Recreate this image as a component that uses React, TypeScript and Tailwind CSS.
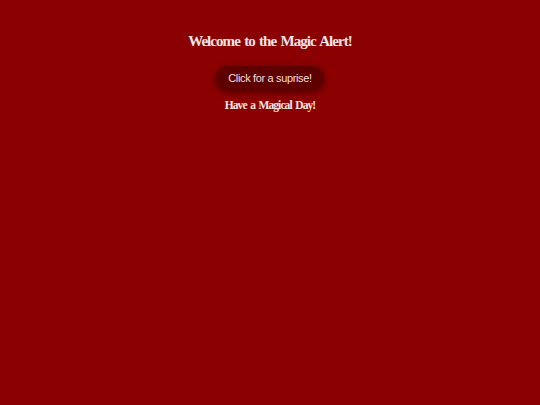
export default function App() {
  return (
    <div className="min-h-[405px] w-full bg-[#8b0000] flex flex-col items-center pt-[32px] font-['Liberation_Serif',serif]">
      <h1 className="text-[15px] font-bold text-[#f3e6e6] leading-[18px] tracking-[-0.95px] [word-spacing:1.5px]">
        Welcome to the Magic Alert!
      </h1>
      <button className="mt-[16px] h-[24px] px-[12px] rounded-[12px] bg-[#5e0000] text-[#f5dede] text-[11px] tracking-[-0.35px] font-['Liberation_Sans',sans-serif] shadow-[0_2px_7px_rgba(0,0,0,0.45)]">
        Click for a suprise!
      </button>
      <p className="mt-[8px] text-[11.5px] font-bold text-[#f3e6e6] leading-[14px] tracking-[-0.9px] [word-spacing:1.5px]">
        Have a Magical Day!
      </p>
    </div>
  );
}
